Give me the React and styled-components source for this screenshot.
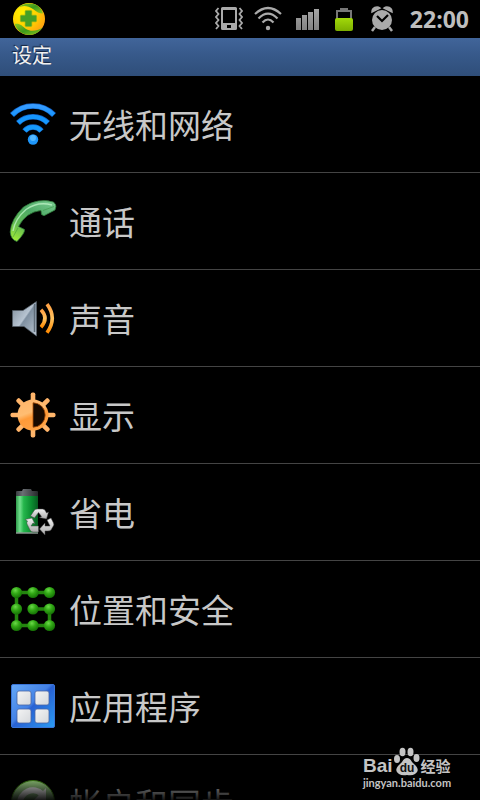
import React from "react";
import styled, { createGlobalStyle } from "styled-components";

const GlobalStyle = createGlobalStyle`
  * { box-sizing: border-box; }
  body {
    margin: 0;
    background: #000;
    color: #c8c8c8;
    font-family: "Open Sans", "Noto Sans CJK SC", sans-serif;
  }
`;

const Screen = styled.div`
  position: relative;
  display: flex;
  flex-direction: column;
  height: 100vh;
  overflow: hidden;
`;

const StatusBar = styled.header`
  display: flex;
  align-items: center;
  justify-content: space-between;
  flex: none;
  height: 38px;
  padding: 0 11px 0 12px;
`;

const StatusGroup = styled.div`
  display: flex;
  align-items: center;
  gap: 10px;
`;

const StatusIcon = styled.svg`
  display: block;
  flex: none;
  width: ${(p) => p.$width}px;
  height: 34px;
`;

const Clock = styled.time`
  margin-left: 6px;
  color: #bebebe;
  font: 700 23px/34px "Open Sans", sans-serif;
`;

const TitleBar = styled.h1`
  flex: none;
  height: 38px;
  margin: 0;
  padding: 0 12px;
  background: linear-gradient(#41659a, #37598a 45%, #2f4e79);
  color: #f0f0f0;
  font-family: "Noto Sans CJK SC", sans-serif;
  font-size: 20px;
  font-weight: 400;
  line-height: 34px;
  text-shadow: -1px -1px 1px #14233c;
`;

const List = styled.ul`
  position: relative;
  flex: 1;
  min-height: 0;
  margin: 0;
  padding: 0;
  overflow: hidden;
  list-style: none;
`;

const Item = styled.li`
  border-bottom: 1px solid #444;
`;

const RowButton = styled.button`
  display: flex;
  align-items: center;
  gap: 12px;
  width: 100%;
  height: 96px;
  padding: 0 9px;
  border: 0;
  background: none;
  color: #c8c8c8;
  font-family: "Noto Sans CJK SC", sans-serif;
  font-size: 33px;
  font-weight: 400;
  line-height: 48px;
  text-align: left;
  cursor: pointer;
`;

const RowIcon = styled.svg`
  flex: none;
  width: 48px;
  height: 48px;
`;

const BottomFade = styled.div`
  position: absolute;
  right: 0;
  bottom: 0;
  left: 0;
  height: 24px;
  background: linear-gradient(rgba(0, 0, 0, 0.1), rgba(0, 0, 0, 0.9));
  pointer-events: none;
`;

const Watermark = styled.div`
  position: absolute;
  right: 28px;
  bottom: 10px;
  width: 89px;
  color: #c4c4c4;
  pointer-events: none;
`;

const Brand = styled.div`
  display: flex;
  align-items: flex-end;
  height: 30px;
`;

const BrandName = styled.span`
  font: 700 19px/20px "Liberation Sans", sans-serif;
`;

const BrandPaw = styled.svg`
  flex: none;
  width: 28px;
  height: 30px;
`;

const BrandSuffix = styled.span`
  font: 700 15px/20px "Noto Sans CJK SC", sans-serif;
  white-space: nowrap;
`;

const BrandSite = styled.div`
  font: 700 11px/14px Lato, sans-serif;
`;

function GuardIcon() {
  return (
    <StatusIcon $width={34} viewBox="0 0 34 34" aria-hidden="true">
      <defs>
        <radialGradient id="guardGold" cx="0.3" cy="0.3" r="0.8">
          <stop offset="0" stopColor="#fff200" />
          <stop offset="0.55" stopColor="#ffd000" />
          <stop offset="1" stopColor="#ff9d12" />
        </radialGradient>
        <linearGradient id="guardLeaf" x1="0" y1="0" x2="1" y2="1">
          <stop offset="0" stopColor="#8cc820" />
          <stop offset="0.5" stopColor="#3d9a1c" />
          <stop offset="1" stopColor="#8fc91e" />
        </linearGradient>
      </defs>
      <circle cx="17" cy="17" r="16" fill="url(#guardGold)" />
      <path d="M6 5.500C14-1 28 0 31 11.500C27 11.500 25 10 21 7C16 3.500 11 3 6 5.500Z" fill="url(#guardLeaf)" />
      <path d="M2.500 22C8 21 10 24 14 27C19 30 25 29 30.500 25.500C24 36 8 36 2.500 22Z" fill="url(#guardLeaf)" />
      <path d="M14 8h5q1 0 1 1v4h4q1 0 1 1v5q0 1-1 1h-4v4q0 1-1 1h-5q-1 0-1-1v-4H9q-1 0-1-1v-5q0-1 1-1h4V9q0-1 1-1Z" transform="translate(.8 .8) scale(.95)" fill="#45a025" stroke="#8fae1a" strokeWidth="0.6" />
    </StatusIcon>
  );
}

function VibrateIcon() {
  return (
    <StatusIcon $width={28} viewBox="2 0 28 34" aria-hidden="true">
      <path d="M9.500 5h13q1.500 0 1.500 1.500v20q0 1.500-1.500 1.500h-13q-1.500 0-1.500-1.500v-20Q8 5 9.500 5ZM10 8v13h12V8ZM14 23v3h4v-3Z" fill="#aaa" fillRule="evenodd" />
      <path d="M5.500 6l-2.500 3 2.500 3-2.500 3 2.500 3-2.500 3 2.500 3-2.500 3M26.500 6l2.500 3-2.500 3 2.500 3-2.500 3 2.500 3-2.500 3 2.500 3" fill="none" stroke="#aaa" strokeWidth="1.800" />
    </StatusIcon>
  );
}

function StatusWifiIcon() {
  return (
    <StatusIcon $width={33} viewBox="0 0 33 34" aria-hidden="true">
      <g fill="none" stroke="#aaa" strokeWidth="2.200">
        <path d="M2 12Q15 0 28 12" />
        <path d="M5.500 16.500Q15 7 24.500 16.500" />
        <path d="M9.500 20.500Q15 14.500 20.500 20.500" />
      </g>
      <circle cx="15" cy="26" r="2.200" fill="#aaa" />
    </StatusIcon>
  );
}

function SignalIcon() {
  return (
    <StatusIcon $width={26} viewBox="0 0 26 34" aria-hidden="true">
      <defs>
        <linearGradient id="signalGrey" x1="0" y1="0" x2="0" y2="1">
          <stop offset="0" stopColor="#a5a5a5" />
          <stop offset="1" stopColor="#838383" />
        </linearGradient>
      </defs>
      <path d="M0 16h5v12H0ZM6 13h5v15H6ZM12 10h5v18h-5ZM18 7h5v21h-5Z" fill="url(#signalGrey)" />
    </StatusIcon>
  );
}

function StatusBatteryIcon() {
  return (
    <StatusIcon $width={26} viewBox="0 0 26 34" aria-hidden="true">
      <defs>
        <linearGradient id="chargeGreen" x1="0" y1="0" x2="0" y2="1">
          <stop offset="0" stopColor="#a2d90a" />
          <stop offset="1" stopColor="#7cae00" />
        </linearGradient>
      </defs>
      <path d="M5 17V9h14v8" fill="none" stroke="#777" strokeWidth="2" />
      <path d="M8 6h8v3H8Z" fill="#777" />
      <rect x="3" y="16" width="18" height="13" rx="2" fill="url(#chargeGreen)" />
    </StatusIcon>
  );
}

function AlarmIcon() {
  return (
    <StatusIcon $width={26} viewBox="0 0 26 34" aria-hidden="true">
      <g transform="translate(1 0)">
        <circle cx="13" cy="18" r="10" fill="#aaa" />
        <path d="M3 10a5 5 0 0 1 8-4ZM23 10a5 5 0 0 0-8-4Z" fill="#aaa" stroke="#aaa" strokeWidth="1.500" />
        <path d="M6 25l-3 4M20 25l3 4" stroke="#aaa" strokeWidth="2.500" />
        <path d="M8 14l5 5 6-6" fill="none" stroke="#000" strokeWidth="2.200" />
      </g>
    </StatusIcon>
  );
}

function WifiIcon() {
  return (
    <RowIcon viewBox="0 0 48 48" aria-hidden="true">
      <defs>
        <linearGradient id="wifiBlue" gradientUnits="userSpaceOnUse" x1="0" y1="4" x2="0" y2="46">
          <stop offset="0" stopColor="#3c9dff" />
          <stop offset="0.3" stopColor="#1596ff" />
          <stop offset="0.7" stopColor="#169cfa" />
          <stop offset="1" stopColor="#4bb9ff" />
        </linearGradient>
      </defs>
      <g fill="none" stroke="#1263c8" strokeWidth="5.500">
        <path d="M3 15A29 29 0 0 1 45 15" />
        <path d="M9 23A21 21 0 0 1 39 23" />
        <path d="M15.500 31A11 11 0 0 1 32.500 31" />
      </g>
      <g fill="none" stroke="url(#wifiBlue)" strokeWidth="4.300">
        <path d="M3.300 14.800A29 29 0 0 1 44.700 14.800" />
        <path d="M9.300 22.800A21 21 0 0 1 38.700 22.800" />
        <path d="M15.800 30.800A11 11 0 0 1 32.200 30.800" />
      </g>
      <circle cx="24" cy="39.500" r="5.200" fill="#1e96fa" />
      <circle cx="24" cy="38" r="3" fill="#6cc6ff" opacity="0.7" />
    </RowIcon>
  );
}

function PhoneIcon() {
  return (
    <RowIcon viewBox="0 0 48 48" aria-hidden="true">
      <defs>
        <linearGradient id="phoneGreen" x1="0.8" y1="0" x2="0.2" y2="1">
          <stop offset="0" stopColor="#72c68a" />
          <stop offset="0.35" stopColor="#4faa67" />
          <stop offset="0.7" stopColor="#62ba53" />
          <stop offset="1" stopColor="#9ae63a" />
        </linearGradient>
      </defs>
      <path d="M46.500 7.500Q47.500 9 46 13L35 18.700L32.500 17.500L32 13.500Q17 15 9.500 29.500L15.500 32.500Q16 36 8 44.500Q2 43 1.200 35Q2 22 14.500 10Q29 .5 44.500 5Z" fill="url(#phoneGreen)" stroke="#317d3b" strokeWidth="0.800" strokeLinejoin="round" />
      <path d="M4 34Q6 22 17 12.500Q29 4 43 8" fill="none" stroke="#c1f4c8" strokeWidth="1.400" opacity="0.750" />
      <path d="M34 13.500l11-4M9 31L4 40" stroke="#39933e" strokeWidth="1" opacity="0.500" />
    </RowIcon>
  );
}

function SpeakerIcon() {
  return (
    <RowIcon viewBox="0 0 48 48" aria-hidden="true">
      <defs>
        <linearGradient id="speakerSteel" x1="0" y1="0" x2="1" y2="1">
          <stop offset="0" stopColor="#7d8b98" />
          <stop offset="0.48" stopColor="#b7c4d1" />
          <stop offset="0.52" stopColor="#7f90a1" />
          <stop offset="1" stopColor="#b9c5d1" />
        </linearGradient>
        <linearGradient id="waveOrange" x1="0" y1="0" x2="0" y2="1">
          <stop offset="0" stopColor="#ffa044" />
          <stop offset="0.5" stopColor="#ffc25e" />
          <stop offset="1" stopColor="#ff8a00" />
        </linearGradient>
      </defs>
      <path d="M3.500 16.500H14L27.500 7.500V42L15 32.500H3.500Z" fill="url(#speakerSteel)" stroke="#535d67" strokeWidth="0.700" />
      <path d="M25.500 10v28" stroke="#5f6c79" strokeWidth="1.500" />
      <g fill="none" stroke="url(#waveOrange)" strokeWidth="3.600">
        <path d="M32 15.800q8 8.500 0 17.400" />
        <path d="M38 10.200q10.500 14 0 28.600" />
      </g>
    </RowIcon>
  );
}

const RAY_ANGLES = [0, 45, 90, 135, 180, 225, 270, 315];

function BrightnessIcon() {
  return (
    <RowIcon viewBox="0 0 48 48" aria-hidden="true">
      <defs>
        <linearGradient id="sunOrange" gradientUnits="userSpaceOnUse" x1="12" y1="0" x2="30" y2="48">
          <stop offset="0" stopColor="#ffb066" />
          <stop offset="0.45" stopColor="#ffbd72" />
          <stop offset="0.55" stopColor="#ff9a38" />
          <stop offset="1" stopColor="#ffa94f" />
        </linearGradient>
      </defs>
      <g fill="url(#sunOrange)">
        {RAY_ANGLES.map((angle) => (
          <rect key={angle} x="21.700" y="1.500" width="4.600" height="9" rx="1.800" transform={`rotate(${angle} 24 24)`} />
        ))}
        <circle cx="24" cy="24" r="15.500" />
      </g>
      <path d="M24 11.800a12.200 12.200 0 0 1 0 24.400Z" fill="#180a00" stroke="#a94e09" strokeWidth="0.800" />
    </RowIcon>
  );
}

function PowerSavingIcon() {
  return (
    <RowIcon viewBox="0 0 48 48" aria-hidden="true">
      <defs>
        <linearGradient id="cellGreen">
          <stop offset="0" stopColor="#2f9b4b" />
          <stop offset="0.18" stopColor="#72e08d" />
          <stop offset="0.35" stopColor="#25b64c" />
          <stop offset="0.7" stopColor="#0b8d30" />
          <stop offset="1" stopColor="#075b20" />
        </linearGradient>
        <linearGradient id="cellCap">
          <stop offset="0" stopColor="#3b3e42" />
          <stop offset="0.3" stopColor="#6b6f74" />
          <stop offset="1" stopColor="#26282a" />
        </linearGradient>
        <linearGradient id="recycleGrey" x1="0" y1="0" x2="0" y2="1">
          <stop offset="0" stopColor="#f2f2f2" />
          <stop offset="1" stopColor="#aaa" />
        </linearGradient>
      </defs>
      <path d="M13 3l1-2h8l1 2h5q1 0 1 1v5H7V4q0-1 1-1Z" fill="url(#cellCap)" />
      <rect x="7" y="8" width="22" height="37" fill="url(#cellGreen)" />
      <path d="M7 45h22" stroke="#8b9790" strokeWidth="1.500" />
      <g fill="url(#recycleGrey)" stroke="#444" strokeWidth="0.500" strokeLinejoin="round">
        <path d="M21.500 28l4-6q1-1 3-1h5q2 0 3 2l1 2 2-1-2 7-7-1.500 2-1-3-4-4 5.500Z" />
        <path d="M38 32l4-2 2.500 5q1 2-.5 3.500L42 42q-1 1-3 1h-3v4l-5.500-6 5.500-6v3h5Z" />
        <path d="M29.500 38v6H24q-2 0-3-2l-3-6q-.5-1.500.5-3L16 31.500l7-1.500 3 6-2-1-2 3Z" />
      </g>
    </RowIcon>
  );
}

const PATTERN_NODES = [
  [7.5, 7.5], [24, 7.5], [40.500, 7.5],
  [7.5, 24], [24, 24], [40.500, 24],
  [7.5, 40.500], [24, 40.500], [40.500, 40.500],
];

function SecurityIcon() {
  return (
    <RowIcon viewBox="0 0 48 48" aria-hidden="true">
      <defs>
        <radialGradient id="nodeGreen" cx="0.4" cy="0.3" r="0.7">
          <stop offset="0" stopColor="#6cd94a" />
          <stop offset="0.45" stopColor="#32a916" />
          <stop offset="1" stopColor="#157205" />
        </radialGradient>
      </defs>
      <path d="M40.500 7.500H7.500V40.500H40.500V24H24" fill="none" stroke="#24850f" strokeWidth="3.500" />
      {PATTERN_NODES.map(([x, y]) => (
        <circle key={`${x}-${y}`} cx={x} cy={y} r="5.600" fill="url(#nodeGreen)" />
      ))}
    </RowIcon>
  );
}

function AppsIcon() {
  return (
    <RowIcon viewBox="0 0 48 48" aria-hidden="true">
      <defs>
        <linearGradient id="appsBlue" x1="0" y1="0" x2="1" y2="1">
          <stop offset="0" stopColor="#65a9f8" />
          <stop offset="0.45" stopColor="#4381e5" />
          <stop offset="0.5" stopColor="#2861d3" />
          <stop offset="1" stopColor="#2a9cf3" />
        </linearGradient>
        <linearGradient id="tileGrey" x1="0" y1="0" x2="1" y2="1">
          <stop offset="0" stopColor="#f4f4f4" />
          <stop offset="1" stopColor="#d5d8dc" />
        </linearGradient>
      </defs>
      <rect x="2.500" y="2.500" width="43" height="43" rx="1.500" fill="url(#appsBlue)" stroke="#3974d7" />
      <g fill="url(#tileGrey)" stroke="#4965a5" strokeWidth="0.800">
        <rect x="8" y="9" width="14" height="14" rx="2" />
        <rect x="26" y="9" width="14" height="14" rx="2" />
        <rect x="8" y="27" width="14" height="14" rx="2" />
        <rect x="26" y="27" width="14" height="14" rx="2" />
      </g>
    </RowIcon>
  );
}

function SyncIcon() {
  return (
    <RowIcon viewBox="0 0 48 48" aria-hidden="true">
      <defs>
        <linearGradient id="syncGreen" x1="0" y1="0" x2="0" y2="1">
          <stop offset="0" stopColor="#a2dd85" />
          <stop offset="0.4" stopColor="#8db685" />
          <stop offset="1" stopColor="#3e8726" />
        </linearGradient>
      </defs>
      <circle cx="24" cy="23" r="21.500" fill="url(#syncGreen)" stroke="#438c16" />
      <path d="M11 25A13 13 0 0 1 33 15" fill="none" stroke="#f3f3f3" strokeWidth="6" />
      <path d="M37 9v13H24Z" fill="#f3f3f3" />
      <path d="M37 23A13 13 0 0 1 15 32" fill="none" stroke="#f3f3f3" strokeWidth="6" />
      <path d="M11 38V25h13Z" fill="#f3f3f3" />
    </RowIcon>
  );
}

const SETTINGS = [
  { label: "无线和网络", Icon: WifiIcon },
  { label: "通话", Icon: PhoneIcon },
  { label: "声音", Icon: SpeakerIcon },
  { label: "显示", Icon: BrightnessIcon },
  { label: "省电", Icon: PowerSavingIcon },
  { label: "位置和安全", Icon: SecurityIcon },
  { label: "应用程序", Icon: AppsIcon },
  { label: "帐户和同步", Icon: SyncIcon },
];

export default function App() {
  return (
    <Screen lang="zh-CN">
      <GlobalStyle />
      <StatusBar>
        <GuardIcon />
        <StatusGroup>
          <VibrateIcon />
          <StatusWifiIcon />
          <SignalIcon />
          <StatusBatteryIcon />
          <AlarmIcon />
          <Clock>22:00</Clock>
        </StatusGroup>
      </StatusBar>
      <TitleBar>设定</TitleBar>
      <List>
        {SETTINGS.map(({ label, Icon }) => (
          <Item key={label}>
            <RowButton type="button">
              <Icon />
              {label}
            </RowButton>
          </Item>
        ))}
      </List>
      <BottomFade />
      <Watermark>
        <Brand>
          <BrandName>Bai</BrandName>
          <BrandPaw viewBox="0 0 28 30" aria-hidden="true">
            <g fill="#c4c4c4">
              <ellipse cx="4" cy="13" rx="3" ry="4" />
              <ellipse cx="9.500" cy="6" rx="3" ry="4.200" />
              <ellipse cx="17.500" cy="6" rx="3" ry="4.200" />
              <ellipse cx="23.500" cy="12" rx="3" ry="4" />
              <path d="M14 12q3 0 5 4l4 4q4 5-1 8-3 2-8 1-5 1-8-1-5-3-1-8l4-4q2-4 5-4Z" />
            </g>
            <text x="14" y="26" textAnchor="middle" fill="#111" fontFamily="Liberation Sans" fontSize="12" fontWeight="700">du</text>
          </BrandPaw>
          <BrandSuffix>经验</BrandSuffix>
        </Brand>
        <BrandSite>jingyan.baidu.com</BrandSite>
      </Watermark>
    </Screen>
  );
}
